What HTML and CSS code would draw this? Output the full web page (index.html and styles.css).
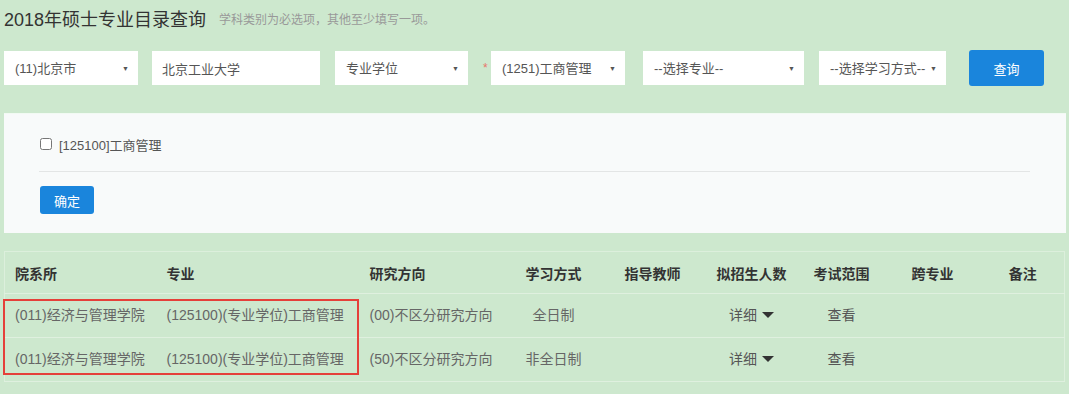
FILE: index.html
```html
<!DOCTYPE html>
<html>
  <head>
    <meta charset="utf-8">
    <title>2018年硕士专业目录查询</title>
    <link rel="stylesheet" href="styles.css">
  </head>
  <body>
    <h1 class="title">2018年硕士专业目录查询<span class="tip">学科类别为必选项，其他至少填写一项。</span></h1>

    <div class="search">
      <div class="sel f-prov">
        <select><option>(11)北京市</option></select>
        <span class="caret">▼</span>
      </div>
      <input class="txt f-school" type="text" value="北京工业大学">
      <div class="sel f-type">
        <select><option>专业学位</option></select>
        <span class="caret">▼</span>
      </div>
      <span class="star">*</span>
      <div class="sel f-subj">
        <select><option>(1251)工商管理</option></select>
        <span class="caret">▼</span>
      </div>
      <div class="sel f-major">
        <select><option>--选择专业--</option></select>
        <span class="caret">▼</span>
      </div>
      <div class="sel f-mode">
        <select><option>--选择学习方式--</option></select>
        <span class="caret">▼</span>
      </div>
      <button class="btn btn-query">查询</button>
    </div>

    <div class="panel">
      <label class="chk"><input type="checkbox"><span>[125100]工商管理</span></label>
      <div class="line"></div>
      <button class="btn btn-ok">确定</button>
    </div>

    <div class="result">
      <table class="list">
        <colgroup>
          <col class="c1"><col class="c2"><col class="c3"><col class="c4"><col class="c5">
          <col class="c6"><col class="c7"><col class="c8"><col class="c9">
        </colgroup>
        <thead>
          <tr>
            <th>院系所</th>
            <th>专业</th>
            <th>研究方向</th>
            <th class="mid">学习方式</th>
            <th class="mid">指导教师</th>
            <th class="mid">拟招生人数</th>
            <th class="mid">考试范围</th>
            <th class="mid">跨专业</th>
            <th class="mid last">备注</th>
          </tr>
        </thead>
        <tbody>
          <tr>
            <td>(011)经济与管理学院</td>
            <td>(125100)(专业学位)工商管理</td>
            <td>(00)不区分研究方向</td>
            <td class="mid">全日制</td>
            <td class="mid"></td>
            <td class="mid"><a class="more" href="javascript:void(0)">详细<i></i></a></td>
            <td class="mid"><a class="look" href="javascript:void(0)">查看</a></td>
            <td class="mid"></td>
            <td class="mid last"></td>
          </tr>
          <tr>
            <td>(011)经济与管理学院</td>
            <td>(125100)(专业学位)工商管理</td>
            <td>(50)不区分研究方向</td>
            <td class="mid">非全日制</td>
            <td class="mid"></td>
            <td class="mid"><a class="more" href="javascript:void(0)">详细<i></i></a></td>
            <td class="mid"><a class="look" href="javascript:void(0)">查看</a></td>
            <td class="mid"></td>
            <td class="mid last"></td>
          </tr>
        </tbody>
      </table>
      <div class="mark"></div>
    </div>
  </body>
</html>
```

FILE: styles.css
```css
*{margin: 0;padding: 0;box-sizing: border-box;}
body {
  background: #cde8ce;
  padding: 0 3px 0 4px;
  font-family: "Liberation Sans", "Noto Sans CJK SC", sans-serif;
  color: #555;
}

.title {font-size: 18px;font-weight: normal;line-height: 24px;padding-top: 8px;color: #333;}
.title .tip {font-size: 12px;color: #999;margin-left: 13px;vertical-align: 2px;}

/* search bar */
.search {display: flex;align-items: center;margin-top: 18px;height: 36px;}
.sel {display: flex;align-items: center;height: 34px;background: #fff;}
.sel select {
  flex: 1;
  min-width: 0;
  height: 100%;
  border: 0;
  outline: 0;
  background: transparent;
  -webkit-appearance: none;
  appearance: none;
  padding-left: 11px;
  font: 13px "Liberation Sans", "Noto Sans CJK SC", sans-serif;
  color: #555;
}
.sel .caret {font-size: 7px;color: #555;margin-right: 9px;}
.txt {
  height: 34px;
  border: 0;
  outline: 0;
  padding-left: 10px;
  font: 13px "Liberation Sans", "Noto Sans CJK SC", sans-serif;
  color: #555;
}
.f-prov {width: 134px;}
.f-school {width: 168px;margin-left: 14px;}
.f-type {width: 133px;margin-left: 15px;}
.star {width: 8px;margin-left: 15px;color: #e8756b;font-size: 12px;}
.f-subj {width: 134px;}
.f-major {width: 161px;margin-left: 18px;}
.f-mode {width: 127px;margin-left: 15px;}

.btn {
  border: 0;
  border-radius: 3px;
  background: #1a85dc;
  color: #fff;
  font: 13px "Liberation Sans", "Noto Sans CJK SC", sans-serif;
}
.btn-query {width: 75px;height: 36px;margin-left: 23px;}

/* choose panel */
.panel {
  margin-top: 27px;
  height: 120px;
  background: #f8fafa;
  border-top: 1px solid #f2faf3;
  padding: 21px 36px 0 35px;
}
.chk {display: flex;align-items: center;height: 18px;font-size: 13px;color: #555;}
.chk input {width: 12px;height: 12px;margin: 0 7px 0 1px;}
.line {height: 1px;background: #e3e5e5;margin-top: 18px;}
.btn-ok {width: 54px;height: 28px;margin-top: 14px;margin-left: 1px;}

/* result table */
.result {position: relative;margin-top: 18px;width: 1060px;}
.list {width: 100%;border-collapse: collapse;table-layout: fixed;border: 1px solid #dcefdc;}
.list .c1 {width: 152px;}
.list .c2 {width: 203px;}
.list .c3 {width: 144px;}
.list .c4 {width: 100px;}
.list .c5 {width: 98px;}
.list .c6 {width: 100px;}
.list .c7 {width: 80px;}
.list .c8 {width: 102px;}
.list .c9 {width: 81px;}
.list th, .list td {text-align: left;padding-left: 10px;white-space: nowrap;border-bottom: 1px solid #dff0df;}
.list th {height: 42px;font-size: 14px;color: #333;font-weight: bold;}
.list td {height: 44px;font-size: 14px;color: #666;padding-bottom: 3px;}
.list .mid {text-align: center;padding-left: 0;}
.list .last {padding-left: 0;padding-right: 2px;}

.more, .look {color: #555;text-decoration: none;}
.more i {
  display: inline-block;
  width: 0;
  height: 0;
  border-left: 6px solid transparent;
  border-right: 6px solid transparent;
  border-top: 6px solid #333;
  margin-left: 5px;
  vertical-align: 2px;
}

/* red annotation frame */
.mark {
  position: absolute;
  left: -1px;
  top: 48px;
  width: 356px;
  height: 76px;
  border: 2px solid #e5403a;
}
```
